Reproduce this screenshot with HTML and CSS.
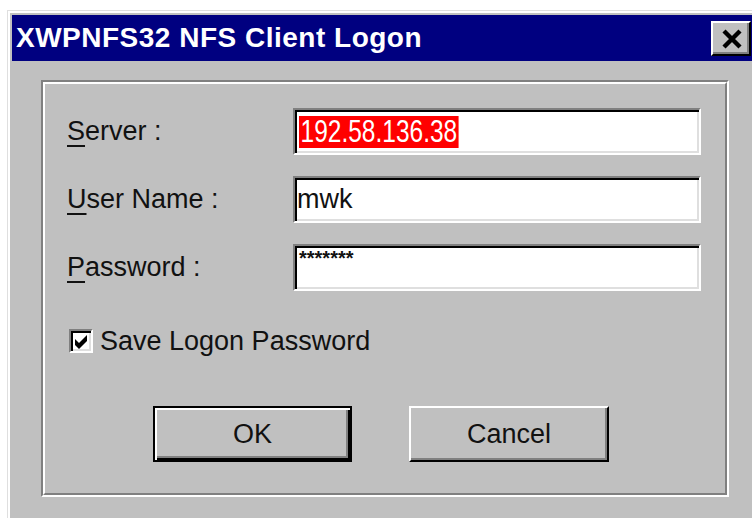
FILE: index.html
```html
<!DOCTYPE html>
<html lang="en">
<head>
<meta charset="utf-8">
<title>XWPNFS32 NFS Client Logon</title>
<link rel="stylesheet" href="styles.css">
</head>
<body>
<div class="window">
  <div class="titlebar">
    <span class="title">XWPNFS32 NFS Client Logon</span>
    <div class="close">
      <svg width="22" height="20" viewBox="0 0 22 20">
        <path d="M3 2 L19 18 M19 2 L3 18" stroke="#000" stroke-width="4.4" fill="none"/>
      </svg>
    </div>
  </div>
  <div class="groupbox">
    <div class="groupbox-inner">
      <div class="fields">
        <div class="label"><span class="mn">S</span>erver :</div>
        <div class="field"><span class="selected">192.58.136.38</span></div>

        <div class="label"><span class="mn">U</span>ser Name :</div>
        <div class="field"><span class="value">mwk</span></div>

        <div class="label"><span class="mn">P</span>assword :</div>
        <div class="field field-top"><span class="secret">*******</span></div>
      </div>

      <div class="check-row">
        <div class="checkbox">
          <svg width="14" height="14" viewBox="0 0 7 7">
            <path d="M0 2 L2 4 L6 0 L6 3 L2 7 L0 5 Z" fill="#000"/>
          </svg>
        </div>
        <span class="check-label">Save Logon Password</span>
      </div>

      <div class="buttons">
        <div class="btn btn-default"><span>OK</span></div>
        <div class="btn"><span>Cancel</span></div>
      </div>
    </div>
  </div>
</div>
</body>
</html>
```

FILE: styles.css
```css
html, body {
  margin: 0;
  padding: 0;
}

body {
  width: 752px;
  height: 518px;
  overflow: hidden;
  background: #ffffff;
  font-family: "Liberation Sans", Arial, sans-serif;
  color: #111;
}

.window {
  margin: 10px 0 0 7px;
  width: 750px;
  height: 520px;
  box-sizing: border-box;
  background: #c0c0c0;
  border-top: 1px solid #dfdfdf;
  border-left: 1px solid #dfdfdf;
  box-shadow: inset 2px 2px 0 #ffffff;
  padding: 4px 4px 0 4px;
}

.titlebar {
  height: 46px;
  background: #000080;
  display: flex;
  align-items: center;
  justify-content: space-between;
  padding: 0 2px 0 4px;
}

.title {
  color: #ffffff;
  font-weight: bold;
  font-size: 28px;
  letter-spacing: 0.5px;
  line-height: 1;
  white-space: nowrap;
}

.close {
  width: 40px;
  height: 35px;
  box-sizing: border-box;
  background: #c0c0c0;
  border-top: 2px solid #ffffff;
  border-left: 2px solid #ffffff;
  border-right: 2px solid #000000;
  border-bottom: 2px solid #000000;
  box-shadow: inset -2px -2px 0 #808080;
  display: flex;
  align-items: center;
  justify-content: center;
  padding: 2px 0 0 2px;
}

.close svg {
  display: block;
}

/* etched group frame */
.groupbox {
  margin: 19px 0 0 29px;
  width: 688px;
  height: 417px;
  box-sizing: border-box;
  border-top: 2px solid #808080;
  border-left: 2px solid #808080;
  border-right: 2px solid #ffffff;
  border-bottom: 2px solid #ffffff;
}

.groupbox-inner {
  height: 100%;
  box-sizing: border-box;
  border-top: 2px solid #ffffff;
  border-left: 2px solid #ffffff;
  border-right: 2px solid #808080;
  border-bottom: 2px solid #808080;
  padding: 24px 0 0 22px;
}

.fields {
  display: grid;
  grid-template-columns: 226px 408px;
  grid-auto-rows: 47px;
  row-gap: 21px;
  align-items: center;
}

.label {
  font-size: 27px;
  line-height: 1;
  white-space: nowrap;
}

.mn {
  text-decoration: underline;
  text-decoration-thickness: 2px;
  text-underline-offset: 5px;
}

/* sunken edit box */
.field {
  height: 47px;
  box-sizing: border-box;
  background: #ffffff;
  border-top: 2px solid #808080;
  border-left: 2px solid #808080;
  border-right: 2px solid #ffffff;
  border-bottom: 2px solid #ffffff;
  box-shadow: inset 2px 2px 0 #000000, inset -2px -2px 0 #dfdfdf;
  display: flex;
  align-items: center;
  padding: 0 2px 0 4px;
  overflow: hidden;
}

.field-top {
  align-items: flex-start;
  padding-top: 2px;
}

.selected {
  display: inline-block;
  background: #ff0000;
  color: #ffffff;
  height: 32px;
  line-height: 32px;
  font-size: 31px;
  padding: 0 2px;
  transform: scaleX(0.79);
  transform-origin: left center;
  white-space: nowrap;
}

.value {
  font-size: 27px;
  line-height: 1;
  margin-left: -2px;
}

.secret {
  font-size: 20px;
  line-height: 20px;
  letter-spacing: 0;
  font-weight: bold;
}

.check-row {
  display: flex;
  align-items: center;
  margin: 37px 0 0 2px;
  height: 26px;
}

.checkbox {
  width: 24px;
  height: 24px;
  box-sizing: border-box;
  background: #ffffff;
  border-top: 2px solid #808080;
  border-left: 2px solid #808080;
  border-right: 2px solid #ffffff;
  border-bottom: 2px solid #ffffff;
  box-shadow: inset 2px 2px 0 #000000, inset -2px -2px 0 #dfdfdf;
  display: flex;
  align-items: center;
  justify-content: center;
  padding: 2px 0 0 2px;
}

.checkbox svg {
  display: block;
}

.check-label {
  margin-left: 7px;
  font-size: 27px;
  line-height: 1;
  white-space: nowrap;
}

.buttons {
  display: flex;
  gap: 57px;
  margin: 52px 0 0 86px;
}

.btn {
  width: 200px;
  height: 56px;
  box-sizing: border-box;
  background: #c0c0c0;
  border-top: 2px solid #ffffff;
  border-left: 2px solid #ffffff;
  border-right: 2px solid #000000;
  border-bottom: 2px solid #000000;
  box-shadow: inset -2px -2px 0 #808080;
  display: flex;
  align-items: center;
  justify-content: center;
  font-size: 27px;
  line-height: 1;
}

.btn-default {
  width: 199px;
  border: 2px solid #000000;
  box-shadow: inset 2px 2px 0 #ffffff, inset -2px -2px 0 #000000, inset -4px -4px 0 #808080;
}
```
